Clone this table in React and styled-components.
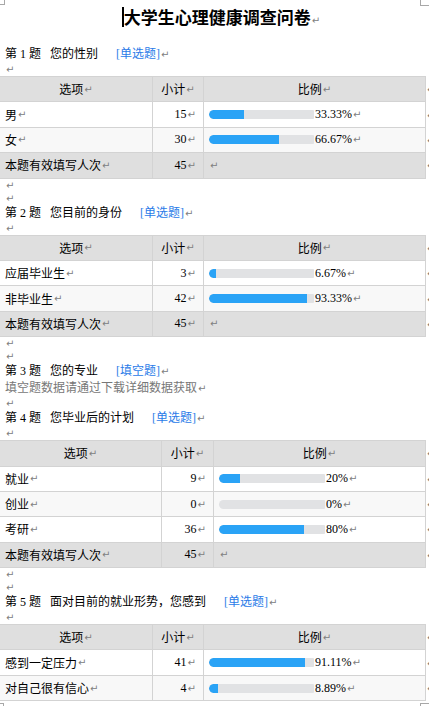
import React from "react";
import styled, { createGlobalStyle } from "styled-components";

const Global = createGlobalStyle`
  html, body { margin: 0; padding: 0; background: #fff; }
  body { overflow: hidden; }
`;

const Page = styled.div`
  position: relative;
  width: 429px;
  height: 706px;
  overflow: hidden;
  background: #fff;
  color: #000;
  font-family: "Liberation Serif", "Noto Sans CJK SC", serif;
  font-size: 12px;
`;

const Corner = styled.span`
  position: absolute;
  box-sizing: border-box;
  border: 0 solid #a8a8a8;
  ${(p) => p.$pos}
`;

const Title = styled.h1`
  margin: 0;
  height: 46px;
  box-sizing: border-box;
  padding: 7px 0 0 13px;
  text-align: center;
  font-family: "Noto Sans CJK SC", sans-serif;
  font-size: 17px;
  font-weight: 700;
  line-height: 20px;
  white-space: nowrap;
`;

const Caret = styled.span`
  display: inline-block;
  width: 2px;
  height: 20px;
  background: #000;
  vertical-align: top;
`;

const Mark = styled.span`
  font-family: "DejaVu Sans", sans-serif;
  font-size: 10px;
  font-weight: 400;
  color: #808080;
  margin-left: 1px;
`;

const Line = styled.div`
  height: ${(p) => p.$h || 17}px;
  line-height: ${(p) => p.$h || 17}px;
  padding-left: 5px;
  white-space: nowrap;
  color: ${(p) => (p.$muted ? "#777" : "#000")};
`;

const QNum = styled.span`
  white-space: pre;
`;

const QText = styled.span`
  margin-left: 9px;
`;

const QTag = styled.span`
  margin-left: 18px;
  color: #2a7be8;
`;

const Table = styled.div`
  width: 427px;
  margin-left: -1px;
  box-sizing: border-box;
  border-top: 1px solid #d3d3d3;
  border-left: 1px solid #d3d3d3;
`;

const Row = styled.div`
  position: relative;
  display: grid;
  grid-template-columns: ${(p) => p.$cols};
  height: 25.4px;
  box-sizing: border-box;
  border-bottom: 1px solid #d3d3d3;
  background: ${(p) =>
    p.$kind === "head" || p.$kind === "total"
      ? "#dfdfdf"
      : p.$kind === "alt"
      ? "#f8f8f8"
      : "#fff"};
  &::after {
    content: "↵";
    position: absolute;
    left: 100%;
    top: 50%;
    transform: translateY(-50%);
    margin-left: 1px;
    font-family: "DejaVu Sans", sans-serif;
    font-size: 10px;
    color: #808080;
  }
`;

const Cell = styled.div`
  display: flex;
  align-items: center;
  justify-content: ${(p) =>
    p.$align === "center" ? "center" : p.$align === "right" ? "flex-end" : "flex-start"};
  padding: ${(p) => (p.$align === "right" ? "0 7px 0 0" : p.$align === "center" ? "0" : "0 0 0 5px")};
  border-right: 1px solid #d3d3d3;
  white-space: nowrap;
  overflow: hidden;
`;

const Track = styled.div`
  width: ${(p) => p.$w}px;
  height: 9px;
  background: #e1e2e4;
  border-radius: 4.5px 1px 1px 4.5px;
  overflow: hidden;
  flex: none;
`;

const Fill = styled.div`
  height: 100%;
  background: #2aa3f6;
  border-radius: 4.5px 0 0 4.5px;
`;

const Pct = styled.span`
  margin-left: 1px;
`;

function Stat({ q, text, tag, cols, barW, rows, total }) {
  return (
    <>
      <Line>
        <QNum>第 {q} 题</QNum>
        <QText>{text}</QText>
        <QTag>[{tag}]</QTag>
        <Mark>↵</Mark>
      </Line>
      <Line $h={13}>
        <Mark>↵</Mark>
      </Line>
      <Table>
        <Row $cols={cols} $kind="head">
          <Cell $align="center">
            选项<Mark>↵</Mark>
          </Cell>
          <Cell $align="center">
            小计<Mark>↵</Mark>
          </Cell>
          <Cell $align="center">
            比例<Mark>↵</Mark>
          </Cell>
        </Row>
        {rows.map((r, i) => (
          <Row key={r.label} $cols={cols} $kind={i % 2 ? "alt" : "plain"}>
            <Cell>
              {r.label}
              <Mark>↵</Mark>
            </Cell>
            <Cell $align="right">
              {r.n}
              <Mark>↵</Mark>
            </Cell>
            <Cell>
              <Track $w={barW}>
                <Fill style={{ width: `${r.p}%` }} />
              </Track>
              <Pct>{r.label2}</Pct>
              <Mark>↵</Mark>
            </Cell>
          </Row>
        ))}
        {total != null && (
          <Row $cols={cols} $kind="total">
            <Cell>
              本题有效填写人次<Mark>↵</Mark>
            </Cell>
            <Cell $align="right">
              {total}
              <Mark>↵</Mark>
            </Cell>
            <Cell>
              <Mark>↵</Mark>
            </Cell>
          </Row>
        )}
      </Table>
    </>
  );
}

const COLS_A = "153px 51px 1fr";
const COLS_B = "162px 52px 1fr";

const pr = (label, n, p, text) => ({ label, n, p, label2: text || `${p}%` });

export default function App() {
  return (
    <Page>
      <Global />
      <Corner $pos="left:0;top:0;width:5px;height:5px;border-right-width:1px;border-bottom-width:1px;" />
      <Corner $pos="left:420px;top:0;width:9px;height:6px;border-left-width:1px;border-bottom-width:1px;" />
      <Corner $pos="left:0;top:703px;width:4px;height:4px;border-right-width:1px;border-top-width:1px;" />
      <Corner $pos="left:420px;top:703px;width:9px;height:4px;border-left-width:1px;border-top-width:1px;" />

      <Title>
        <Caret />
        大学生心理健康调查问卷
        <Mark>↵</Mark>
      </Title>

      <Stat
        q="1"
        text="您的性别"
        tag="单选题"
        cols={COLS_A}
        barW={105}
        rows={[pr("男", 15, 33.33, "33.33%"), pr("女", 30, 66.67, "66.67%")]}
        total={45}
      />
      <Line $h={13}>
        <Mark>↵</Mark>
      </Line>
      <Line $h={13}>
        <Mark>↵</Mark>
      </Line>

      <Stat
        q="2"
        text="您目前的身份"
        tag="单选题"
        cols={COLS_A}
        barW={105}
        rows={[pr("应届毕业生", 3, 6.67, "6.67%"), pr("非毕业生", 42, 93.33, "93.33%")]}
        total={45}
      />
      <Line $h={13}>
        <Mark>↵</Mark>
      </Line>
      <Line $h={13}>
        <Mark>↵</Mark>
      </Line>

      <Line>
        <QNum>第 3 题</QNum>
        <QText>您的专业</QText>
        <QTag>[填空题]</QTag>
        <Mark>↵</Mark>
      </Line>
      <Line $muted>
        填空题数据请通过下载详细数据获取<Mark>↵</Mark>
      </Line>
      <Line $h={13}>
        <Mark>↵</Mark>
      </Line>

      <Stat
        q="4"
        text="您毕业后的计划"
        tag="单选题"
        cols={COLS_B}
        barW={106}
        rows={[pr("就业", 9, 20), pr("创业", 0, 0), pr("考研", 36, 80)]}
        total={45}
      />
      <Line $h={13}>
        <Mark>↵</Mark>
      </Line>
      <Line $h={13}>
        <Mark>↵</Mark>
      </Line>

      <Stat
        q="5"
        text="面对目前的就业形势，您感到"
        tag="单选题"
        cols={COLS_A}
        barW={105}
        rows={[pr("感到一定压力", 41, 91.11, "91.11%"), pr("对自己很有信心", 4, 8.89, "8.89%")]}
      />
    </Page>
  );
}
